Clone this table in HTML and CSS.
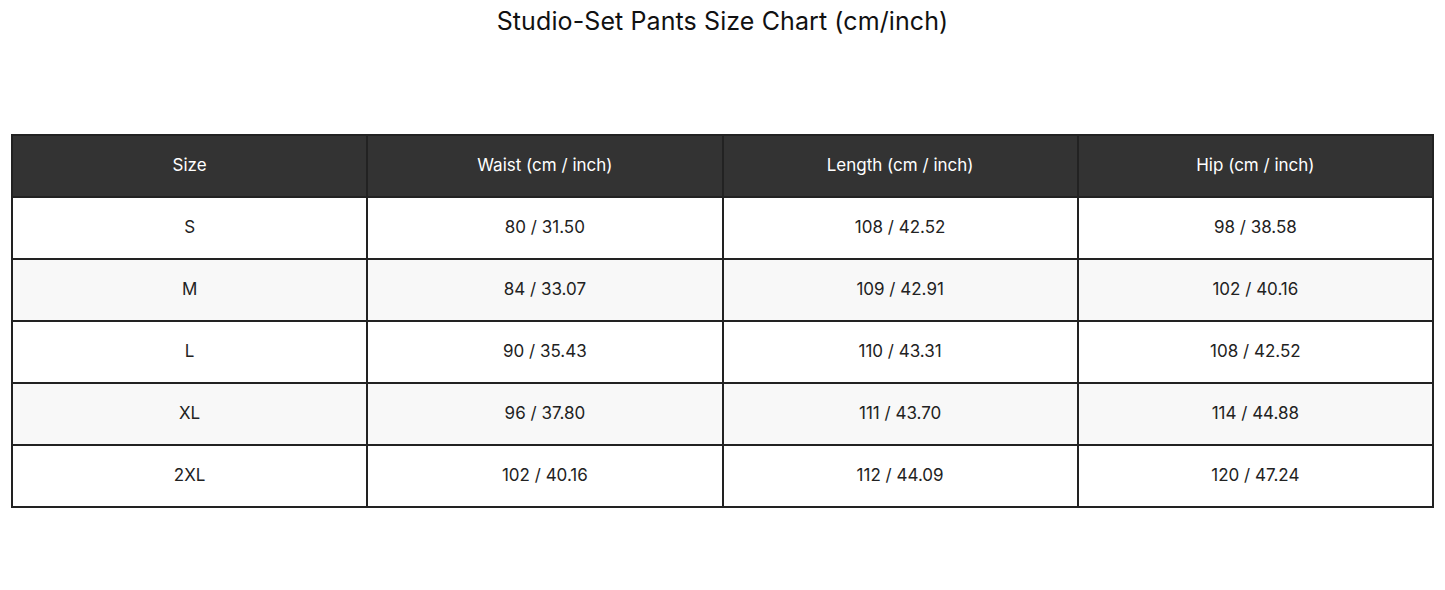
FILE: index.html
```html
<!DOCTYPE html>
<html>
<head>
<meta charset="utf-8">
<link rel="stylesheet" href="styles.css">
</head>
<body>
<h1 class="title">Studio-Set Pants Size Chart (cm/inch)</h1>
<div class="wrap">
<table class="chart">
<thead>
<tr><th>Size</th><th>Waist (cm / inch)</th><th>Length (cm / inch)</th><th>Hip (cm / inch)</th></tr>
</thead>
<tbody>
<tr><td>S</td><td>80 / 31.50</td><td>108 / 42.52</td><td>98 / 38.58</td></tr>
<tr><td>M</td><td>84 / 33.07</td><td>109 / 42.91</td><td>102 / 40.16</td></tr>
<tr><td>L</td><td>90 / 35.43</td><td>110 / 43.31</td><td>108 / 42.52</td></tr>
<tr><td>XL</td><td>96 / 37.80</td><td>111 / 43.70</td><td>114 / 44.88</td></tr>
<tr><td>2XL</td><td>102 / 40.16</td><td>112 / 44.09</td><td>120 / 47.24</td></tr>
</tbody>
</table>
</div>
</body>
</html>
```

FILE: styles.css
```css
html, body { margin: 0; padding: 0; background: #fff; }
body { font-family: "Inter", "Open Sans", sans-serif; color: #222; }
.title {
  margin: 0;
  padding-top: 5px;
  height: 134px;
  box-sizing: border-box;
  text-align: center;
  font-weight: 400;
  font-size: 25px;
  line-height: 32px;
  letter-spacing: 0.1px;
  color: #111;
}
.wrap { padding: 0 11px; }
.chart {
  width: 100%;
  border-collapse: collapse;
  table-layout: fixed;
  border: 2px solid #222;
}
.chart th, .chart td {
  border: 2px solid #222;
  text-align: center;
  height: 62px;
  padding: 0 0 3px 0;
  font-size: 17px;
  box-sizing: border-box;
}
.chart th { background: #333; color: #fff; font-weight: 400; }
.chart tbody tr:nth-child(even) td { background: #f8f8f8; }
```
